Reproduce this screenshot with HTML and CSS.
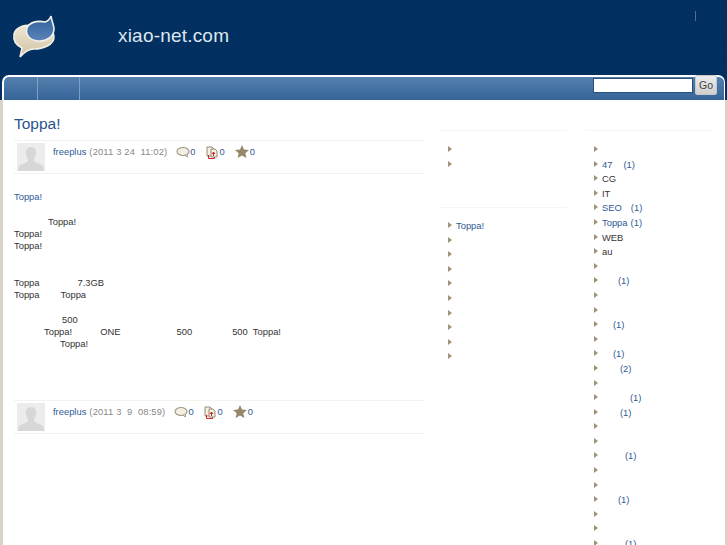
FILE: index.html
```html
<!DOCTYPE html>
<html lang="ja">
<head>
<meta charset="utf-8">
<title>xiao-net.com</title>
<link rel="stylesheet" href="styles.css">
</head>
<body>
<header class="site-head">
  <svg class="logo" width="50" height="50" viewBox="8 12 50 50">
    <defs>
      <linearGradient id="blue" x1="0" y1="0" x2="0" y2="1"><stop offset="0" stop-color="#2f5f9c"/><stop offset="1" stop-color="#5b84b8"/></linearGradient>
      <linearGradient id="sand" x1="0" y1="0" x2="0" y2="1"><stop offset="0" stop-color="#efe7d3"/><stop offset="1" stop-color="#cfc3a4"/></linearGradient>
    </defs>
    <path d="M20 57l2-9c-6-3-9-8-8-14 2-7 10-9 18-9 12 0 22 4 22 12 0 8-11 12-20 12-4 0-8 1-14 8z" fill="url(#sand)" stroke="#f3f0e7" stroke-width="1.500"/>
    <path d="M51 16c-1 3-3 5-6 6-9-2-16 1-18 6-2 6 2 12 11 13 8 1 15-4 16-11 .5-4-2-7-3-14z" fill="url(#blue)" stroke="#f3f2ec" stroke-width="1.600"/>
  </svg>
  <div class="brand">xiao-net.com</div>
  <span class="head-sep"></span>
</header>
<nav class="nav">
  <span class="tab tab-a"></span>
  <span class="tab tab-b"></span>
  <form class="search">
    <input class="search-box" type="text" aria-label="search">
    <button class="go" type="button">Go</button>
  </form>
</nav>
<div class="columns">
  <main class="main">
    <h1 class="title">Toppa!</h1>
    <div class="meta">
      <svg class="avatar" width="28" height="28" viewBox="0 0 28 28"><rect width="28" height="28" fill="#ececec"/><path d="M14 4c-4 0-5.500 3-5 7 .3 2 1 4 2 5v2c-1 2-7 3-9 5-.7 1-1 3-1 5h26c0-2-.3-4-1-5-2-2-8-3-9-5v-2c1-1 1.700-3 2-5 .5-4-1-7-5-7z" fill="#d7d7d7"/></svg>
      <div class="meta-line">
        <a class="author">freeplus</a>
        <span class="date">(2011 3 24&nbsp; 11:02)</span>
        <span class="stats">
          <svg class="ico" width="14" height="12" viewBox="0 0 14 12"><ellipse cx="7" cy="5.500" rx="6" ry="4" fill="#f3efe5" stroke="#a49a84" stroke-width="1.200"/><path d="M9 9l2.500 2-.5-3" fill="#f3efe5" stroke="#a49a84"/></svg><b class="n n-first">0</b>
          <svg class="ico ico-doc" width="12" height="13" viewBox="0 0 12 13"><path d="M1 1h5l2 2v7H1z" fill="#f4efe3" stroke="#9a8a70"/><path d="M5 3h4l2 2v6H5z" fill="#f4efe3" stroke="#9a8a70"/><path d="M2.500 9v3.500h6V11M7.500 10V6.500M6 8l1.500-2L9 8" fill="none" stroke="#c8262c"/></svg><b class="n">0</b>
          <svg class="ico ico-star" width="14" height="13" viewBox="0 0 14 13"><path d="M7 0l2 4.500 5 .5-3.700 3.300 1.100 4.700L7 10.500 2.600 13l1.100-4.700L0 5l5-.5z" fill="#97876a"/></svg><b class="n n-last">0</b>
        </span>
      </div>
    </div>
    <article class="body">
      <p class="lead"><a>Toppa!</a></p>
      <p class="para"><i class="sp sp34"></i>Toppa!<br>Toppa!<br>Toppa!</p>
      <p class="para para-b">Toppa<i class="sp sp38"></i>7.3GB<br>Toppa<i class="sp sp21"></i>Toppa</p>
      <p class="para para-c"><i class="sp sp48"></i>500<br><i class="sp sp30"></i>Toppa!<i class="sp sp27"></i>ONE<i class="sp sp56"></i>500<i class="sp sp40"></i>500&nbsp; Toppa!<br><i class="sp sp46"></i>Toppa!</p>
    </article>
    <div class="meta">
      <svg class="avatar" width="28" height="28" viewBox="0 0 28 28"><rect width="28" height="28" fill="#ececec"/><path d="M14 4c-4 0-5.500 3-5 7 .3 2 1 4 2 5v2c-1 2-7 3-9 5-.7 1-1 3-1 5h26c0-2-.3-4-1-5-2-2-8-3-9-5v-2c1-1 1.700-3 2-5 .5-4-1-7-5-7z" fill="#d7d7d7"/></svg>
      <div class="meta-line">
        <a class="author">freeplus</a>
        <span class="date">(2011 3&nbsp; 9&nbsp; 08:59)</span>
        <span class="stats">
          <svg class="ico" width="14" height="12" viewBox="0 0 14 12"><ellipse cx="7" cy="5.500" rx="6" ry="4" fill="#f3efe5" stroke="#a49a84" stroke-width="1.200"/><path d="M9 9l2.500 2-.5-3" fill="#f3efe5" stroke="#a49a84"/></svg><b class="n n-first">0</b>
          <svg class="ico ico-doc" width="12" height="13" viewBox="0 0 12 13"><path d="M1 1h5l2 2v7H1z" fill="#f4efe3" stroke="#9a8a70"/><path d="M5 3h4l2 2v6H5z" fill="#f4efe3" stroke="#9a8a70"/><path d="M2.500 9v3.500h6V11M7.500 10V6.500M6 8l1.500-2L9 8" fill="none" stroke="#c8262c"/></svg><b class="n">0</b>
          <svg class="ico ico-star" width="14" height="13" viewBox="0 0 14 13"><path d="M7 0l2 4.500 5 .5-3.700 3.300 1.100 4.700L7 10.500 2.600 13l1.100-4.700L0 5l5-.5z" fill="#97876a"/></svg><b class="n n-last">0</b>
        </span>
      </div>
    </div>
  </main>
  <aside class="side side-mid">
    <ul class="list list-short"><li></li><li></li></ul>
    <ul class="list list-recent"><li><a>Toppa!</a></li><li></li><li></li><li></li><li></li><li></li><li></li><li></li><li></li><li></li></ul>
  </aside>
  <aside class="side side-right">
    <ul class="list">
      <li></li>
      <li><a>47<i class="sp sp11"></i>(1)</a></li>
      <li>CG</li>
      <li>IT</li>
      <li><a>SEO<i class="sp sp7"></i>(1)</a></li>
      <li><a>Toppa<i class="sp sp3"></i>(1)</a></li>
      <li>WEB</li>
      <li>au</li>
      <li></li>
      <li><a><i class="sp sp16"></i>(1)</a></li>
      <li></li>
      <li></li>
      <li><a><i class="sp sp11"></i>(1)</a></li>
      <li></li>
      <li><a><i class="sp sp11"></i>(1)</a></li>
      <li><a><i class="sp sp18"></i>(2)</a></li>
      <li></li>
      <li><a><i class="sp sp27"></i>(1)</a></li>
      <li><a><i class="sp sp18"></i>(1)</a></li>
      <li></li>
      <li></li>
      <li><a><i class="sp sp23"></i>(1)</a></li>
      <li></li>
      <li></li>
      <li><a><i class="sp sp16"></i>(1)</a></li>
      <li></li>
      <li></li>
      <li><a><i class="sp sp23"></i>(1)</a></li>
    </ul>
  </aside>
</div>
</body>
</html>
```
FILE: styles.css
```css
* { box-sizing: border-box; }
html, body { margin: 0; height: 545px; overflow: hidden; }
body {
  font-family: "Liberation Sans", Arial, sans-serif;
  font-size: 9.4px;
  color: #333;
  background: #02305f repeating-linear-gradient(135deg, #012f5f 0, #012f5f 2px, #033262 2px, #033262 3px);
}
a { color: #2f5a96; }

.site-head { height: 75px; position: relative; display: flex; align-items: flex-start; padding: 12px 0 0 8px; }
.logo { flex: none; }
.brand { margin: 12px 0 0 60px; font-size: 19px; line-height: 24px; letter-spacing: .2px; color: #dfe6ef; }
.head-sep { position: absolute; left: 695px; top: 11px; width: 1px; height: 10px; background: #4a6d94; }

.nav {
  height: 25px;
  margin: 0 2px;
  border: solid #fff;
  border-width: 2px 1px 0 2px;
  border-radius: 7px 7px 0 0;
  background: linear-gradient(#5580ae, #356499);
  display: flex;
  align-items: stretch;
}
.tab { border-right: 1px solid #7f9fc2; }
.tab-a { width: 34px; }
.tab-b { width: 42px; }
.search { margin: 1px 7px 0 auto; display: flex; align-items: flex-start; }
.search-box { width: 100px; height: 15px; margin: 0; padding: 0; border: 1px solid #284f80; background: #fff; }
.go { width: 22px; height: 20px; margin: -3px 0 0 2px; padding: 0; border: 1px solid #c8c8c8; border-radius: 2px; background: linear-gradient(#eee, #cfcfcf); color: #444; font: 10.5px "Liberation Sans", Arial, sans-serif; }

.columns { display: flex; align-items: flex-start; height: 445px; background: #fff; border: solid #d8d4c8; border-width: 0 2px 0 3px; }
.main { flex: none; width: 410px; margin-left: 11px; }
.title { margin: 14px 0 6px; font-size: 15.5px; line-height: 20px; font-weight: 400; color: #2a5391; }
.meta { display: flex; height: 34px; padding: 2px 0 0 3px; border: solid #f3f2ee; border-width: 1px 0; }
.avatar { flex: none; }
.meta-line { margin: 2px 0 0 8px; line-height: 13px; white-space: nowrap; display: flex; }
.date { color: #888; margin-left: 3px; letter-spacing: .15px; }
.stats { display: inline-flex; align-items: center; height: 13px; margin-left: 9px; }
.ico { flex: none; }
.n { font-weight: 400; color: #2f5a96; margin: 0 10px 0 2px; }
.n-first { margin-left: 0; }
.n-last { margin: 0 0 0 1px; }
.ico-doc { margin-top: 2px; }
.ico-star { margin-top: -1px; }

.body { height: 226px; line-height: 12.2px; }
.body p { margin: 0; }
.body .lead { padding-top: 17px; }
.body .para { margin-top: 12.5px; }
.body .para-b { margin-top: 24.5px; }
.body .para-c { margin-top: 12.5px; }

.sp { display: inline-block; font-style: normal; }
.sp3 { width: 3px; }
.sp7 { width: 9px; }
.sp11 { width: 11px; }
.sp16 { width: 16px; }
.sp18 { width: 18px; }
.sp21 { width: 21px; }
.sp23 { width: 23px; }
.sp27 { width: 28px; }
.sp30 { width: 30px; }
.sp34 { width: 34px; }
.sp38 { width: 38px; }
.sp40 { width: 40px; }
.sp46 { width: 46px; }
.sp48 { width: 48px; }
.sp56 { width: 56px; }

.side { flex: none; width: 127px; }
.side-mid { margin-left: 16px; }
.side-right { margin-left: 19px; }
.list {
  margin: 30px 0 0;
  padding: 11px 0 0 8px;
  list-style: none;
  border-top: 1px solid #f6f5f0;
}
.list-short { height: 77px; }
.list-recent { margin-top: 0; padding-top: 10px; }
.list li { position: relative; height: 14.6px; line-height: 16px; padding-left: 8px; }
.list li::before {
  content: "";
  position: absolute;
  left: 0;
  top: 4px;
  border-left: 4px solid #a09378;
  border-top: 3px solid transparent;
  border-bottom: 3px solid transparent;
}
```
